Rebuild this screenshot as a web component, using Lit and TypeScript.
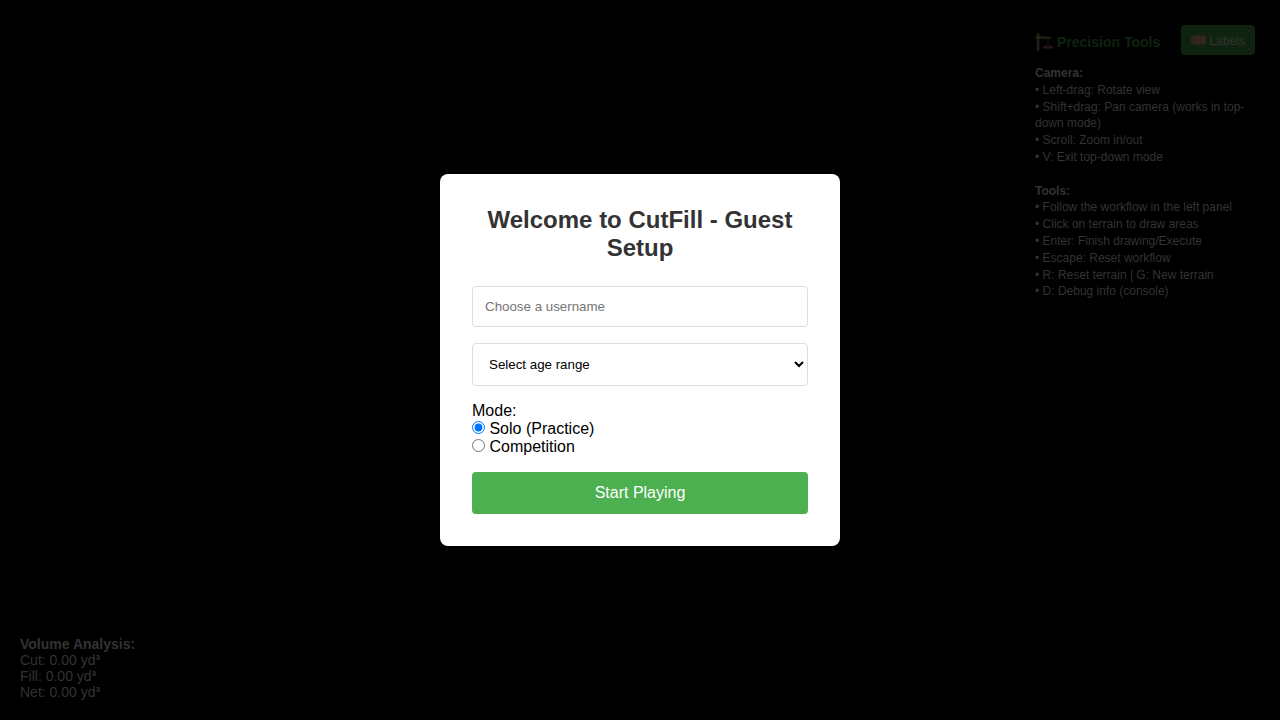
import { LitElement, html, css } from "lit";
import { customElement } from "lit/decorators.js";

@customElement("tools-panel")
class ToolsPanel extends LitElement {
  static styles = css`
    :host { display: block; box-sizing: border-box; width: 220px; color: #333; }
    .head { display: flex; justify-content: space-between; height: 30px; }
    .title { display: flex; align-items: center; margin: 0; padding-top: 4px; height: 30px; box-sizing: border-box; font-size: 14px; line-height: 16px; font-weight: bold; color: #0f2310; white-space: nowrap; }
    .crane { width: 18px; height: 18px; margin-right: 4px; }
    .labels { display: flex; align-items: center; box-sizing: border-box; width: 74px; height: 30px; padding: 2px 0 0 10px; border: 0; border-radius: 4px; background: #0f2310; color: #333; font: 12px "Liberation Sans", Arial, sans-serif; }
    .tag { width: 15px; height: 10px; margin: -3px 3.4px 0 0; }
    .help { margin-top: 10px; font-size: 12px; line-height: 16.8px; }
    .group + .group { margin-top: 16.8px; }
  `;

  private camera = ["Left-drag: Rotate view", "Shift+drag: Pan camera (works in top-down mode)", "Scroll: Zoom in/out", "V: Exit top-down mode"];
  private tools = ["Follow the workflow in the left panel", "Click on terrain to draw areas", "Enter: Finish drawing/Execute", "Escape: Reset workflow", "R: Reset terrain | G: New terrain", "D: Debug info (console)"];

  private group(name: string, lines: string[]) {
    return html`<div class="group"><strong>${name}</strong>${lines.map((l) => html`<div>• ${l}</div>`)}</div>`;
  }

  render() {
    return html`
      <div class="head">
        <h3 class="title">
          <svg class="crane" viewBox="0 0 18 18">
            <path d="M1.7.2h2.8v17.6H1.7z" fill="#211c14" />
            <path d="M.4 3.3l15.6.8v1.7L.4 5.6z" fill="#2a2315" />
            <path d="M3 .6l10 3.4" stroke="#14110b" stroke-width=".5" />
            <path d="M13 5.5v5.5M13 10.5l-3.6 3M13 10.5l3.6 3" fill="none" stroke="#1d1d20" stroke-width=".8" />
            <path d="M8 13.2h10v2.4H8z" fill="#261815" />
          </svg>Precision Tools
        </h3>
        <button class="labels">
          <svg class="tag" viewBox="0 0 15 10">
            <path fill-rule="evenodd" d="M3 .6h11.4q.6 0 .6.6v7.6q0 .6-.6.6H3Q2.2 9.4 1.6 8.8L.4 7.4Q0 7 0 6.4V3.6Q0 3 .4 2.6L1.6 1.2Q2.2.6 3 .6zM2.6 4a1 1 0 1 0 .01 0z" fill="#33271f" />
          </svg>Labels
        </button>
      </div>
      <div class="help">${this.group("Camera:", this.camera)}${this.group("Tools:", this.tools)}</div>
    `;
  }
}

@customElement("guest-setup")
class GuestSetup extends LitElement {
  static styles = css`
    :host { display: block; box-sizing: border-box; width: 400px; padding: 32px; border-radius: 8px; background: #fff; color: #000; font-size: 16px; line-height: 18px; }
    .heading { margin: 0 0 24px; font-size: 24px; line-height: 28px; text-align: center; color: #333; }
    .field { display: block; box-sizing: border-box; width: 100%; margin: 0 0 16px; padding: 12px; border: 1px solid #ddd; border-radius: 4px; background: #fff; color: #000; font: 13.3333px "Liberation Sans", Arial, sans-serif; }
    .username { height: 41px; }
    .username::placeholder { color: #757575; }
    .age { height: 43px; }
    .mode { margin-bottom: 16px; }
    .option { display: block; height: 18px; }
    .radio { width: 13px; height: 13px; margin: 0; }
    .start { display: block; width: 100%; height: 42px; padding: 0; border: 0; border-radius: 4px; background: #4caf50; color: #fff; font: 16px "Liberation Sans", Arial, sans-serif; }
  `;

  render() {
    return html`
      <h2 class="heading">Welcome to CutFill - Guest Setup</h2>
      <input class="field username" type="text" placeholder="Choose a username" />
      <select class="field age"><option>Select age range</option></select>
      <div class="mode">
        <div>Mode:</div>
        <label class="option"><input class="radio" type="radio" name="mode" checked /> Solo (Practice)</label>
        <label class="option"><input class="radio" type="radio" name="mode" /> Competition</label>
      </div>
      <button class="start">Start Playing</button>
    `;
  }
}

@customElement("app-root")
class AppRoot extends LitElement {
  static styles = css`
    :host { display: grid; grid-template: 100vh / 100vw; overflow: hidden; background: #000; font-family: "Liberation Sans", Arial, sans-serif; }
    .tools, .dialog, .volume { grid-area: 1 / 1; }
    .tools { justify-self: end; align-self: start; margin: 25px 25px 0 0; }
    .dialog { place-self: center; }
    .volume { justify-self: start; align-self: end; margin: 0 0 20px 20px; font-size: 14px; line-height: 16px; color: #333; }
    .cubed { font-weight: bold; }
  `;

  private volumes = ["Cut", "Fill", "Net"];

  render() {
    return html`
      <tools-panel class="tools"></tools-panel>
      <div class="volume">
        <div><strong>Volume Analysis:</strong></div>
        ${this.volumes.map((v) => html`<div>${v}: 0.00 yd<span class="cubed">³</span></div>`)}
      </div>
      <guest-setup class="dialog"></guest-setup>
    `;
  }
}
